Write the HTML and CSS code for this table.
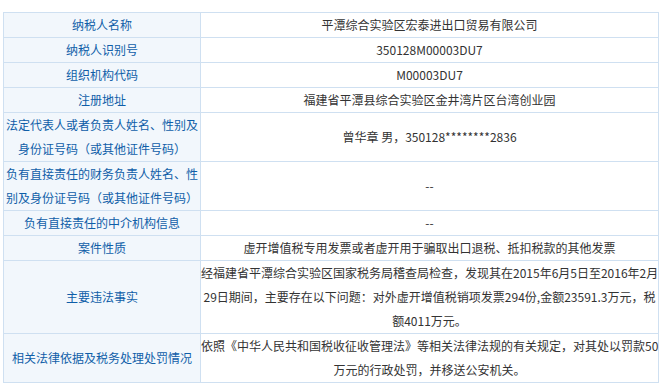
FILE: index.html
```html
<!DOCTYPE html>
<html lang="zh-CN">
<head>
<meta charset="utf-8">
<title>案件信息</title>
<link rel="stylesheet" href="styles.css">
</head>
<body>
<table class="info">
  <colgroup><col class="c-label"><col class="c-value"></colgroup>
  <tbody>
    <tr><th>纳税人名称</th><td>平潭综合实验区宏泰进出口贸易有限公司</td></tr>
    <tr><th>纳税人识别号</th><td>350128M00003DU7</td></tr>
    <tr><th>组织机构代码</th><td>M00003DU7</td></tr>
    <tr><th>注册地址</th><td>福建省平潭县综合实验区金井湾片区台湾创业园</td></tr>
    <tr><th>法定代表人或者负责人姓名、性别及<br>身份证号码（或其他证件号码）</th><td>曾华章 男，350128********2836</td></tr>
    <tr><th>负有直接责任的财务负责人姓名、性<br>别及身份证号码（或其他证件号码）</th><td>--</td></tr>
    <tr><th>负有直接责任的中介机构信息</th><td>--</td></tr>
    <tr><th>案件性质</th><td>虚开增值税专用发票或者虚开用于骗取出口退税、抵扣税款的其他发票</td></tr>
    <tr><th>主要违法事实</th><td>经福建省平潭综合实验区国家税务局稽查局检查，发现其在2015年6月5日至2016年2月<br>29日期间，主要存在以下问题：对外虚开增值税销项发票294份,金额23591.3万元，税<br>额4011万元。</td></tr>
    <tr><th>相关法律依据及税务处理处罚情况</th><td>依照《中华人民共和国税收征收管理法》等相关法律法规的有关规定，对其处以罚款50<br>万元的行政处罚，并移送公安机关。</td></tr>
  </tbody>
</table>
</body>
</html>
```
FILE: styles.css
```css
html, body {
  margin: 0;
  background: #ffffff;
}
body {
  padding: 12px 0 0 3px;
  font-family: "Noto Sans CJK SC", "Liberation Sans", sans-serif;
  font-size: 12px;
}
.info {
  border-collapse: collapse;
  table-layout: fixed;
  width: 656px;
}
.c-label { width: 197px; }
.info th,
.info td {
  border: 1px solid #cfe0f1;
  padding: 0;
  line-height: 24px;
  text-align: center;
  vertical-align: middle;
  font-weight: normal;
  white-space: nowrap;
}
.info th {
  background: #f2f7fc;
  color: #0f5ea8;
}
.info td {
  background: #ffffff;
  color: #333333;
}
```
